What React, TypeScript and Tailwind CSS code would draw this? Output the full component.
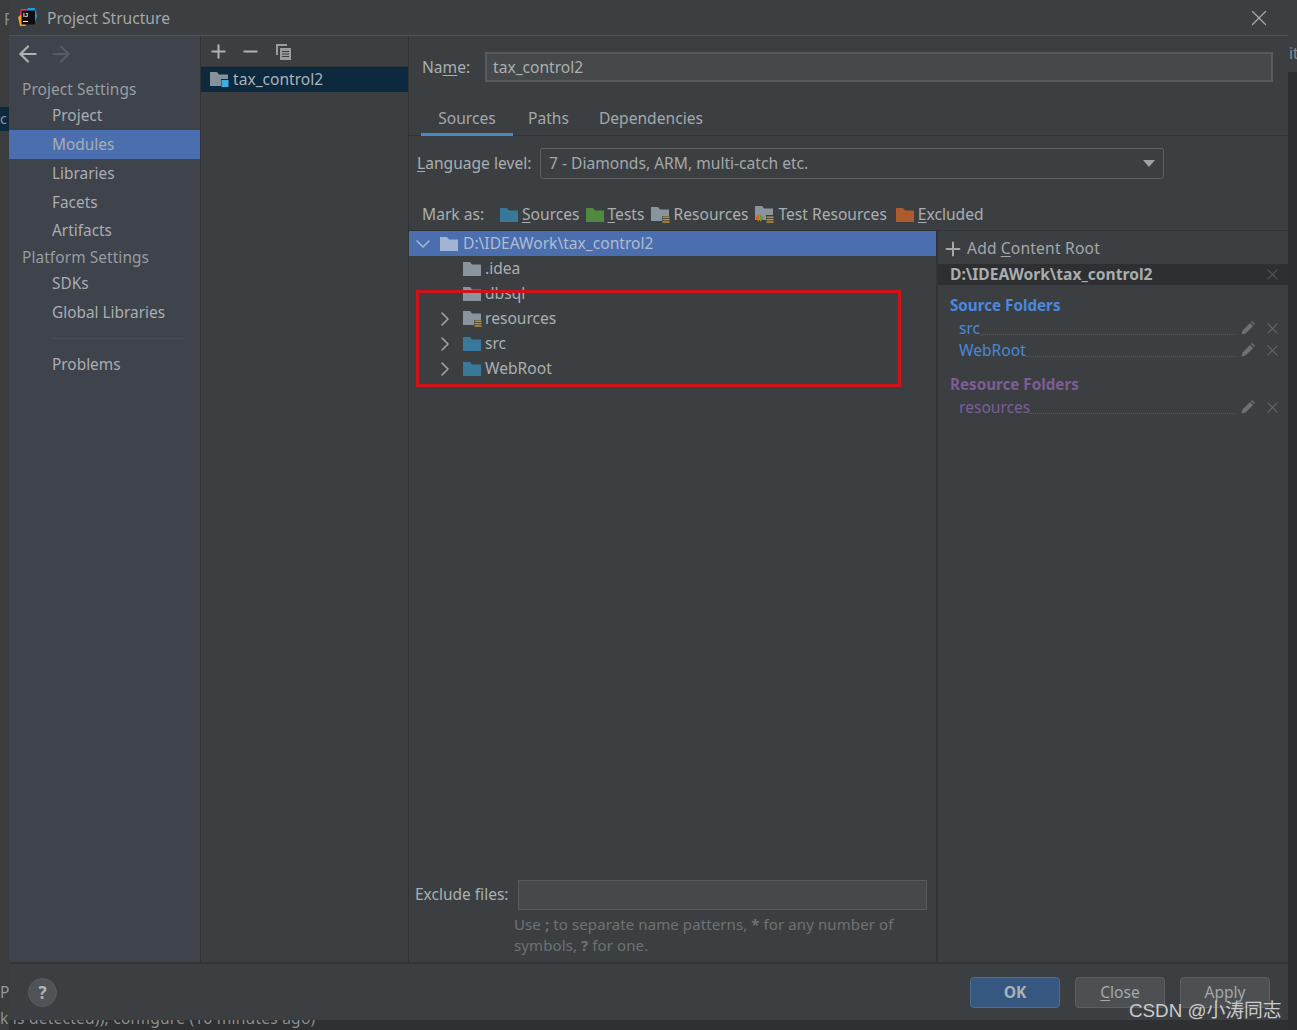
import React from "react";
import { ArrowLeft, ArrowRight, ChevronDown, ChevronRight, Minus, Plus, X } from "lucide-react";

const font = "font-['Noto_Sans','Noto_Sans_CJK_SC',sans-serif]";

function Folder({ className }: { className: string }) {
  return (
    <svg width="18" height="14" viewBox="0 0 18 14" className={"shrink-0 " + className}>
      <path d="M0 0h7l2 2.5h9V14H0z" />
    </svg>
  );
}

// little stack of orange bars used on the resource folders
function Bars({ x, y }: { x: number; y: number }) {
  return (
    <g fill="#c9952f">
      <rect x={x} y={y} width="7" height="1.4" />
      <rect x={x} y={y + 2.4} width="7" height="1.4" />
      <rect x={x} y={y + 4.8} width="7" height="1.4" />
    </g>
  );
}

function ResourceFolder() {
  return (
    <svg width="19" height="16" viewBox="0 0 19 16" className="shrink-0">
      <path d="M0 0h7l2 2.5h9V9h-7v5H0z" fill="#8a949c" />
      <Bars x={11.5} y={9.5} />
    </svg>
  );
}

function TestResourceFolder() {
  return (
    <svg width="19" height="18" viewBox="0 0 19 18" className="shrink-0">
      <path d="M0 0h7l2 2.5h9V9h-7v5H0z" fill="#8a949c" />
      <path d="M4 8 0 12l4 4z" fill="#d9601f" />
      <path d="M5 8l4 4-4 4z" fill="#5f9b45" />
      <Bars x={11.5} y={10.5} />
    </svg>
  );
}

function Pencil() {
  return (
    <svg width="14" height="14" viewBox="0 0 14 14" className="shrink-0">
      <path d="M0.5 13.5 1.5 9.5 9 2l3 3-7.5 7.5zM10 1l1-1 3 3-1 1z" fill="#6e7275" />
    </svg>
  );
}

function Ul({ children }: { children: string }) {
  return <span className="underline underline-offset-2 decoration-1">{children}</span>;
}

function SideItem({ label, active, className }: { label: string; active?: boolean; className?: string }) {
  return (
    <div className={"pl-[43px] flex items-center text-[15.4px] text-[#a9aeb1] " + (active ? "bg-[#4b6eaf] " : "") + (className || "")}>
      {label}
    </div>
  );
}

function SideHead({ label, className }: { label: string; className: string }) {
  return <div className={"pl-[13px] flex items-center text-[15.4px] tracking-[0.1px] text-[#989da0] " + className}>{label}</div>;
}

function TreeRow({ icon, label, arrow }: { icon: React.ReactNode; label: string; arrow?: boolean }) {
  return (
    <div className="h-[25px] flex items-center text-[15.6px] text-[#a9b0b3]">
      <div className="w-[54px] pl-[24px] shrink-0">
        {arrow && <ChevronRight size={24} strokeWidth={1.6} className="text-[#a0a4a6]" />}
      </div>
      <div className="w-[22px] shrink-0 flex">{icon}</div>
      {label}
    </div>
  );
}

function FolderEntry({ label, text, dots }: { label: string; text: string; dots: string }) {
  return (
    <div className="h-[22px] flex items-center pl-[21px] pr-[6px]">
      <span className={"text-[15.6px] " + text}>{label}</span>
      <div className={"flex-1 h-[12px] border-b border-dotted " + dots} />
      <div className="w-[5px]" />
      <div className="flex items-center -mt-[2px]">
        <Pencil />
        <X size={19} strokeWidth={1.3} className="ml-[8px] text-[#686b6e]" />
      </div>
    </div>
  );
}

function App() {
  return (
    <div className={"relative w-[1297px] h-[1030px] overflow-hidden flex items-start bg-[#2e3032] " + font}>
      <div className="w-[9px] h-[1030px] shrink-0 bg-[#3a3c3e]" />

      {/* bits of the IDE behind the dialog */}
      <span className="absolute left-[4px] top-[8px] text-[15.6px] text-[#8b8f91]">F</span>
      <span className="absolute left-0 top-[107px] w-[9px] h-[24px] bg-[#0d293e] overflow-hidden text-[14px] text-[#8b9aa3] leading-[24px]">c</span>
      <span className="absolute left-0 top-[981px] text-[15.6px] text-[#8b9aa3]">P</span>
      <div className="absolute left-0 top-[1007px] whitespace-nowrap text-[15.6px] tracking-[0.2px] leading-[22px] text-[#8b8f91]">k is detected)), configure (16 minutes ago)</div>

      <div className="relative z-10 w-[1279px] h-[1020px] shrink-0 flex flex-col bg-[#3c3f41]">
        {/* title bar */}
        <div className="h-[36px] shrink-0 flex items-center border-b border-[#515456] pl-[9px] pr-[16px]">
          <svg width="20" height="20" viewBox="0 0 20 20" className="shrink-0">
            <path d="M3 1h8L9 10H1z" fill="#f0356f" />
            <path d="M10 0h7l2 8-3 9-6-4z" fill="#1b9be8" />
            <path d="M0 9l5-3 3 12H2z" fill="#f9a01b" />
            <rect x="3.5" y="2.5" width="13.5" height="14" fill="#0d0d0d" />
            <text x="5" y="9" fontSize="6" fontWeight="700" fill="#e8e8e8" fontFamily="Liberation Sans">IJ</text>
            <rect x="5" y="13" width="5" height="1" fill="#e8e8e8" />
          </svg>
          <span className="ml-[9px] pt-[3px] text-[15.6px] text-[#a3a8aa]">Project Structure</span>
          <X size={26} strokeWidth={1.1} className="ml-auto text-[#a9acae]" />
        </div>

        <div className="h-[928px] shrink-0 flex border-b-2 border-[#323436]">
          {/* settings sidebar */}
          <div className="w-[192px] shrink-0 bg-[#3e434c] border-r border-[#323232] flex flex-col">
            <div className="h-[35px] flex items-center pl-[6px] gap-[7px]">
              <ArrowLeft size={26} strokeWidth={2} className="text-[#b0b3b5]" />
              <ArrowRight size={26} strokeWidth={2} className="text-[#595c5f]" />
            </div>
            <SideHead label="Project Settings" className="h-[36px] pt-[2px]" />
            <SideItem label="Project" className="h-[23px] pb-[5px]" />
            <SideItem label="Modules" active className="h-[29px]" />
            <SideItem label="Libraries" className="h-[29px]" />
            <SideItem label="Facets" className="h-[29px]" />
            <SideItem label="Artifacts" className="h-[27px]" />
            <SideHead label="Platform Settings" className="h-[27px]" />
            <SideItem label="SDKs" className="h-[25px]" />
            <SideItem label="Global Libraries" className="h-[33px]" />
            <div className="h-px ml-[43px] mr-[16px] mt-[9px] bg-[#484c54]" />
            <SideItem label="Problems" className="h-[26px] mt-[13px]" />
          </div>

          {/* modules list */}
          <div className="w-[208px] shrink-0 border-r border-[#323232] flex flex-col">
            <div className="h-[31px] shrink-0 border-b border-[#323436] flex items-center pl-[7px] text-[#afb1b3]">
              <Plus size={21} strokeWidth={2.4} />
              <Minus size={21} strokeWidth={2.4} className="ml-[11px]" />
              <svg width="17" height="17" viewBox="0 0 17 17" className="ml-[14px]">
                <path d="M1 1h11v2H3v9H1z" fill="#9a9da0" />
                <path d="M5 5h11v12H5z" fill="#9a9da0" />
                <path d="M7 8h7v1H7zM7 10.5h7v1H7zM7 13h7v1H7z" fill="#3c3f41" />
              </svg>
            </div>
            <div className="h-[25px] shrink-0 bg-[#0d293e] flex items-center pl-[9px] text-[15.6px] text-[#a9b4bb]">
              <svg width="19" height="17" viewBox="0 0 19 17" className="shrink-0 mr-[4px]">
                <path d="M0 1h7l2 2.5h9V8H11v7H0z" fill="#87939a" />
                <rect x="11.5" y="9" width="7" height="7" fill="#3daee0" />
              </svg>
              tax_control2
            </div>
          </div>

          {/* module settings */}
          <div className="flex-1 min-w-0 flex flex-col">
            <div className="h-[62px] shrink-0 flex items-center pl-[13px] pr-[15px] text-[15.6px] text-[#a9afb1]">
              <span className="w-[63px] shrink-0 pt-[1px]">Na<Ul>m</Ul>e:</span>
              <div className="flex-1 h-[30px] bg-[#45494a] border-2 border-[#575b5d] flex items-center pl-[6px] pt-[1px] text-[#a9afb1]">tax_control2</div>
            </div>
            <div className="h-[38px] shrink-0 border-b border-[#323436] flex pl-[12px] text-[15.6px] text-[#a3a9ab]">
              <div className="w-[92px] h-[38px] shrink-0 border-b-[3px] border-[#4a88c7] flex justify-center pt-[9px]">Sources</div>
              <div className="ml-[15px] pt-[9px]">Paths</div>
              <div className="ml-[30px] pt-[9px]">Dependencies</div>
            </div>
            <div className="h-[55px] shrink-0 flex items-center pl-[8px] text-[15.6px] text-[#a9afb1]">
              <span className="w-[123px] shrink-0"><Ul>L</Ul>anguage level:</span>
              <div className="w-[624px] h-[31px] border border-[#606365] rounded-[3px] flex items-center justify-between pl-[8px] pr-[8px] text-[#a3a9ab]">
                7 - Diamonds, ARM, multi-catch etc.
                <span className="w-0 h-0 border-x-[6px] border-x-transparent border-t-[7px] border-t-[#9ea2a4]" />
              </div>
            </div>
            <div className="h-[40px] shrink-0 border-b border-[#323436] flex items-center pt-[9px] pl-[13px] text-[15.6px] text-[#a9afb1]">
              <span className="w-[78px] shrink-0">Mark as:</span>
              <Folder className="fill-[#38789b]" />
              <span className="ml-[4px]"><Ul>S</Ul>ources</span>
              <Folder className="fill-[#4f8a3f] ml-[6px]" />
              <span className="ml-[4px]"><Ul>T</Ul>ests</span>
              <div className="ml-[7px] flex"><ResourceFolder /></div>
              <span className="ml-[3px]">Resources</span>
              <div className="ml-[7px] flex"><TestResourceFolder /></div>
              <span className="ml-[4px]">Test Resources</span>
              <Folder className="fill-[#ad5a2c] ml-[9px]" />
              <span className="ml-[4px]"><Ul>E</Ul>xcluded</span>
            </div>

            <div className="flex-1 min-h-0 flex">
              {/* source tree and exclude files */}
              <div className="w-[529px] shrink-0 border-r-2 border-[#323436] flex flex-col">
                <div className="h-[25px] bg-[#4b6eaf] flex items-center text-[15.6px] text-[#b0bccf]">
                  <ChevronDown size={24} strokeWidth={1.6} className="ml-[2px] text-[#a9b6d0]" />
                  <Folder className="fill-[#a2b4d3] ml-[5px]" />
                  <span className="ml-[5px]">D:\IDEAWork\tax_control2</span>
                </div>
                <TreeRow icon={<Folder className="fill-[#8a949c]" />} label=".idea" />
                <TreeRow icon={<Folder className="fill-[#8a949c]" />} label="dbsql" />
                <TreeRow icon={<ResourceFolder />} label="resources" arrow />
                <TreeRow icon={<Folder className="fill-[#38789b]" />} label="src" arrow />
                <TreeRow icon={<Folder className="fill-[#38789b]" />} label="WebRoot" arrow />

                <div className="mt-auto pl-[6px] pr-[9px] pb-[6px]">
                  <div className="flex items-center text-[15.5px] text-[#a9afb1]">
                    <span className="w-[103px] shrink-0">Exclude files:</span>
                    <div className="flex-1 h-[30px] bg-[#45494a] border border-[#575b5d]" />
                  </div>
                  <div className="mt-[4px] pl-[99px] text-[15px] leading-[21px] tracking-[0.1px] text-[#6d7275]">
                    Use <b>;</b> to separate name patterns, <b>*</b> for any number of<br />
                    symbols, <b>?</b> for one.
                  </div>
                </div>
              </div>

              {/* content root panel */}
              <div className="flex-1 min-w-0 flex flex-col">
                <div className="h-[33px] shrink-0 flex items-center pl-[4px] pt-[3px] text-[15.6px] tracking-[0.2px] text-[#a3a8aa]">
                  <Plus size={22} strokeWidth={2.2} className="text-[#a5a8aa] mr-[3px]" />
                  Add <span className="ml-[4px]"><Ul>C</Ul>ontent Root</span>
                </div>
                <div className="h-[21px] shrink-0 bg-[#2d2f30] flex items-center justify-between pl-[12px] pr-[6px] text-[15.6px] font-bold text-[#a9adaf]">
                  D:\IDEAWork\tax_control2
                  <X size={19} strokeWidth={1.3} className="text-[#5a5d5f]" />
                </div>
                <div className="h-[33px] shrink-0 flex items-end pl-[12px] pb-[1px] text-[15.2px] font-bold text-[#4a88e0]">Source Folders</div>
                <FolderEntry label="src" text="text-[#4a88d8]" dots="border-[#55585a]" />
                <FolderEntry label="WebRoot" text="text-[#4a88d8]" dots="border-[#55585a]" />
                <div className="h-[35px] shrink-0 flex items-end pl-[12px] pb-[1px] text-[15.2px] font-bold text-[#7d5d96]">Resource Folders</div>
                <FolderEntry label="resources" text="text-[#7d5d96]" dots="border-[#55585a]" />
              </div>
            </div>
          </div>
        </div>

        {/* footer */}
        <div className="flex-1 flex items-center justify-between pl-[19px] pr-[18px] pt-[1px]">
          <div className="w-[29px] h-[29px] rounded-full bg-[#505355] border border-[#5a5d5f] flex items-center justify-center text-[17px] font-bold text-[#b0b3b5]">?</div>
          <div className="flex gap-[15px] text-[15.6px]">
            <div className="w-[90px] h-[31px] rounded-[4px] bg-[#365880] border border-[#4c708c] flex items-center justify-center font-bold text-[#a9b1b8]">OK</div>
            <div className="w-[90px] h-[31px] rounded-[4px] bg-[#4c5052] border border-[#5e6060] flex items-center justify-center text-[#a3a8aa]"><span><Ul>C</Ul>lose</span></div>
            <div className="w-[90px] h-[31px] rounded-[4px] bg-[#4c5052] border border-[#5e6060] flex items-center justify-center text-[#a3a8aa]">Apply</div>
          </div>
        </div>
      </div>

      <div className="w-[9px] h-[1030px] shrink-0 bg-[#2b2d2e] flex flex-col">
        <div className="h-[72px] shrink-0 bg-[#3c3f41] overflow-hidden pt-[42px] pl-[1px] text-[15.6px] text-[#888b8d]">it</div>
      </div>

      {/* red annotation box */}
      <div className="absolute z-20 left-[416px] top-[290px] w-[485px] h-[97px] border-[3px] border-[#d0121a]" />

      {/* watermark */}
      <span className="absolute z-20 left-[1129px] top-[997px] text-[18.8px] leading-[28px] text-[#c9cbcc] font-['Liberation_Sans','Noto_Sans_CJK_SC',sans-serif]">CSDN @小涛同志</span>
    </div>
  );
}

export default App;
